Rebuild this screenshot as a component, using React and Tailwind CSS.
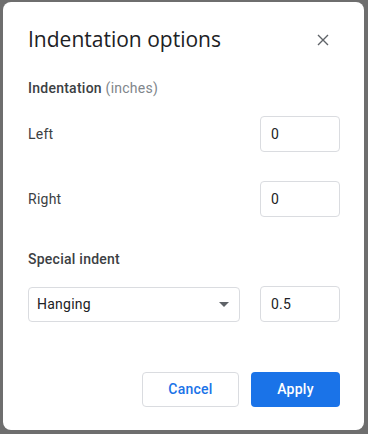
import React from 'react';

const font = { fontFamily: 'Roboto, "Liberation Sans", sans-serif' };

const NumberBox = ({ value }) => (
  <div className="w-[80px] h-[36px] border border-[#dadce0] rounded-[4px] flex items-center px-[10px] text-[14px] tracking-[0.2px] text-[#202124]">
    {value}
  </div>
);

export default function App() {
  return (
    <div
      className="w-[368px] h-[434px] bg-[#6e6e6e] pt-[2px] pl-[3px] pr-[4px] pb-[4px]"
      style={font}
    >
      <div className="h-full bg-white rounded-[8px] pl-[25px] pr-[24px] pt-[24px] flex flex-col">
        <div className="flex items-center justify-between h-[28px]">
          <h1
            className="text-[21px] leading-[28px] text-[#202124] -mt-[3px]"
            style={{ fontFamily: '"Open Sans", Roboto, sans-serif' }}
          >
            Indentation options
          </h1>
          <svg width="12" height="12" viewBox="0 0 12 12" className="mr-[11px]">
            <path d="M1 1 L11 11 M11 1 L1 11" stroke="#5f6368" strokeWidth="1.4" />
          </svg>
        </div>

        <div className="mt-[24px] text-[14px] leading-[20px] tracking-[0.25px]">
          <span className="font-medium text-[#3c4043]">Indentation</span>{' '}
          <span className="text-[#80868b]">(inches)</span>
        </div>

        <div className="mt-[18px] flex items-center justify-between">
          <span className="text-[14px] tracking-[0.25px] text-[#3c4043]">Left</span>
          <NumberBox value="0" />
        </div>

        <div className="mt-[29px] flex items-center justify-between">
          <span className="text-[14px] tracking-[0.25px] text-[#3c4043]">Right</span>
          <NumberBox value="0" />
        </div>

        <div className="mt-[32px] text-[14px] leading-[20px] tracking-[0.25px] font-medium text-[#3c4043]">
          Special indent
        </div>

        <div className="mt-[17px] flex items-center justify-between">
          <div className="w-[212px] h-[35px] border border-[#dadce0] rounded-[4px] flex items-center justify-between pl-[8px] pr-[10px] text-[14px] tracking-[0.25px] text-[#202124]">
            <span>Hanging</span>
            <svg width="10" height="5" viewBox="0 0 10 5">
              <path d="M0 0 L10 0 L5 5 Z" fill="#5f6368" />
            </svg>
          </div>
          <NumberBox value="0.5" />
        </div>

        <div className="mt-[50px] flex justify-end gap-[12px]">
          <button className="w-[97px] h-[35px] border border-[#dadce0] rounded-[4px] text-[14px] tracking-[0.25px] font-medium text-[#1a73e8] bg-white">
            Cancel
          </button>
          <button className="w-[89px] h-[35px] rounded-[4px] text-[14px] tracking-[0.25px] font-medium text-white bg-[#1a73e8]">
            Apply
          </button>
        </div>
      </div>
    </div>
  );
}
